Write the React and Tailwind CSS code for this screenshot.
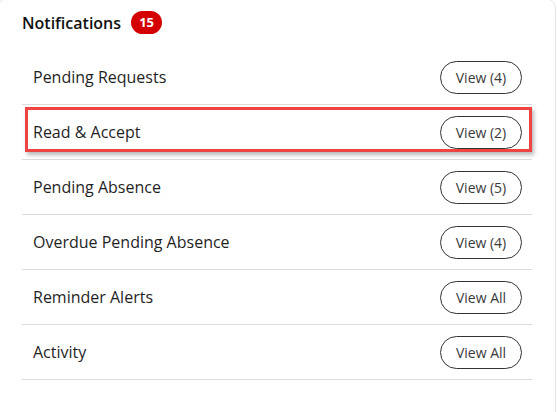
const rows = [
  { label: 'Pending Requests', action: 'View (4)' },
  { label: 'Read & Accept', action: 'View (2)', highlight: true },
  { label: 'Pending Absence', action: 'View (5)' },
  { label: 'Overdue Pending Absence', action: 'View (4)' },
  { label: 'Reminder Alerts', action: 'View All' },
  { label: 'Activity', action: 'View All' },
];

function NotificationRow({ label, action, highlight }) {
  return (
    <div className="relative flex h-[55px] items-center justify-between border-b border-[#dcdcdc] pl-[11px] pr-[10px]">
      {highlight && (
        <div className="pointer-events-none absolute left-[3px] top-[2px] h-[45px] w-[507px] border-[3px] border-[#ef4444] shadow-[2px_3px_4px_rgba(0,0,0,0.28)]" />
      )}
      <span className="text-[16px] text-[#1f1f1f]">{label}</span>
      <button className="h-[33px] w-[82px] rounded-full border border-[#333] bg-white text-[14px] text-[#3a3a3a]">
        {action}
      </button>
    </div>
  );
}

export default function App() {
  return (
    <div className="h-[412px] w-[557px] overflow-hidden bg-white font-['Open_Sans',sans-serif]">
      <div className="-ml-[3px] -mt-[3px] h-[430px] w-[559px] rounded-[12px] border border-[#e3e3e3] bg-white pl-[24px]">
        <div className="flex h-[52px] items-center gap-[10px] pb-[3px]">
          <h2 className="text-[16px] font-semibold text-[#111]">Notifications</h2>
          <span className="flex h-[23px] w-[31px] items-center justify-center rounded-full bg-[#d40000] text-[13px] font-bold text-white">
            15
          </span>
        </div>
        <div className="w-[510px]">
          {rows.map((row) => (
            <NotificationRow key={row.label} {...row} />
          ))}
        </div>
      </div>
    </div>
  );
}
